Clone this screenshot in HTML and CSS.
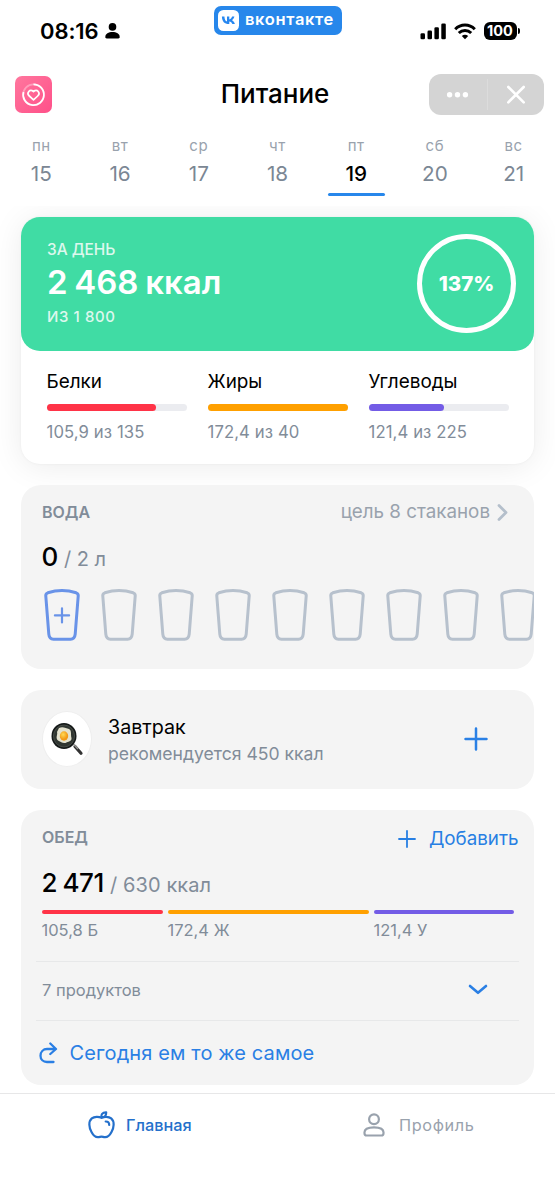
FILE: index.html
```html
<!DOCTYPE html>
<html lang="ru">
<head>
<meta charset="utf-8">
<title>Питание</title>
<link rel="stylesheet" href="styles.css">
</head>
<body>
<svg width="0" height="0" class="defs">
  <symbol id="glass" viewBox="0 0 36 52"><path d="M1.8 7.2C1.6 5.3 2.2 4.4 3.8 3.8C12.500 1 23.500 1 32.200 3.8C33.800 4.4 34.400 5.300 34.200 7.200L31.200 45.200C30.900 48.700 29.200 50.200 26.500 50.200H9.500C6.800 50.200 5.100 48.700 4.800 45.200Z" fill="none" stroke="currentColor" stroke-width="3"/></symbol>
</svg>
<div class="screen">
  <header class="status">
    <div class="clock"><span class="time">08:16</span>
      <svg width="15" height="16" viewBox="0 0 15 16"><circle cx="7.500" cy="3.900" r="3.800"/><path d="M0.300 14C0.300 10.600 3.600 9 7.500 9s7.200 1.600 7.200 5c0 1-.5 1.400-1.400 1.400H1.700C.8 15.400.3 15 .3 14z"/></svg>
    </div>
    <div class="vk">
      <svg width="21" height="21" viewBox="0 0 21 21"><rect width="21" height="21" rx="5.500" fill="#fff"/><path d="M3.300 6.500h2.500c.1 3.200 1.400 4.800 2.600 5.100V6.500h2.300v2.900c1.300-.1 2.300-1.400 2.800-2.900h2.300c-.4 1.800-1.500 3.100-2.400 3.700 1 .5 2.200 1.500 2.900 3.900h-2.500c-.5-1.600-1.600-2.500-3.100-2.700v2.700h-.5c-4.200 0-6.800-2.700-6.900-7.600z" transform="translate(.6 0)" fill="#2787f0"/></svg>
      <span>вконтакте</span>
    </div>
    <div class="signals">
      <svg width="27" height="17" viewBox="0 0 27 17"><rect x=".5" y="10.300" width="4.500" height="6" rx="1.300"/><rect x="7.500" y="7.600" width="4.500" height="8.700" rx="1.300"/><rect x="14.400" y="4.200" width="4.500" height="12.100" rx="1.300"/><rect x="21.300" y=".5" width="4.500" height="15.800" rx="1.300"/></svg>
      <svg width="22" height="17" viewBox="0 0 22 17" fill="none" stroke="#000" stroke-width="3"><path d="M1.200 6.200C6.700.7 15.300.7 20.800 6.200"/><path d="M4.800 10C8.300 6.600 13.700 6.600 17.200 10"/><path d="M11 16.200L7.800 13C9.600 11.400 12.400 11.400 14.200 13Z" fill="#000" stroke="none"/></svg>
      <div class="battery"><span class="charge">100</span><i class="tip"></i></div>
    </div>
  </header>

  <div class="titlebar">
    <svg class="app" width="37" height="37" viewBox="0 0 37 37"><defs><linearGradient id="pink" x1="0" y1="0" x2="1" y2="1"><stop offset="0" stop-color="#ff779e"/><stop offset="1" stop-color="#ff5089"/></linearGradient></defs><rect width="37" height="37" rx="7" fill="url(#pink)"/><g fill="none" stroke="#fff" stroke-width="1.700"><circle cx="18.500" cy="18.700" r="10.400" opacity=".35"/><path d="M18.500 8.300A10.400 10.400 0 1 1 8.500 15.900"/><path d="M18.500 23.800L14.300 20C11.100 17 14.700 12.300 18.500 15.500C22.300 12.300 25.900 17 22.700 20Z" stroke-linejoin="round"/></g></svg>
    <h1>Питание</h1>
    <div class="controls">
      <svg width="58" height="41" viewBox="0 0 58 41" fill="#fff"><circle cx="20.600" cy="20.700" r="2.700"/><circle cx="28.500" cy="20.700" r="2.700"/><circle cx="36.400" cy="20.700" r="2.700"/></svg>
      <svg class="close" width="57" height="41" viewBox="0 0 57 41" stroke="#fff" stroke-width="2.600" stroke-linecap="round"><path d="M21.300 13L36.700 28.400M36.700 13L21.300 28.400"/></svg>
    </div>
  </div>

  <nav class="week">
    <div class="day"><small>пн</small><b>15</b></div>
    <div class="day"><small>вт</small><b>16</b></div>
    <div class="day"><small>ср</small><b>17</b></div>
    <div class="day"><small>чт</small><b>18</b></div>
    <div class="day active"><small>пт</small><b>19</b></div>
    <div class="day"><small>сб</small><b>20</b></div>
    <div class="day"><small>вс</small><b>21</b></div>
  </nav>

  <main>
    <section class="summary">
      <div class="total">
        <div>
          <p class="cap">ЗА ДЕНЬ</p>
          <p class="kcal">2 468 ккал</p>
          <p class="of">ИЗ 1 800</p>
        </div>
        <div class="ring"><span>137%</span></div>
      </div>
      <div class="macros">
        <div><h2>Белки</h2><div class="bar"><i class="red" style="width:78.400%"></i></div><p>105,9 из 135</p></div>
        <div><h2>Жиры</h2><div class="bar"><i class="orange" style="width:100%"></i></div><p>172,4 из 40</p></div>
        <div><h2>Углеводы</h2><div class="bar"><i class="violet" style="width:54%"></i></div><p>121,4 из 225</p></div>
      </div>
    </section>

    <section class="card water">
      <div class="head"><h3>ВОДА</h3><div class="goal"><span>цель 8 стаканов</span><svg width="11" height="18" viewBox="0 0 11 18" fill="none" stroke="#b4bfcb" stroke-width="2.800" stroke-linecap="round" stroke-linejoin="round"><path d="M2 2.500L9 9.500L2 16.500"/></svg></div></div>
      <p class="amount"><strong>0</strong><span>/ 2 л</span></p>
      <div class="glasses">
        <svg class="first" viewBox="0 0 36 52"><use href="#glass"/><path d="M18 19.300V33.500M10.900 26.400H25.100" stroke="currentColor" stroke-width="2.200" stroke-linecap="round"/></svg>
        <svg><use href="#glass"/></svg><svg><use href="#glass"/></svg><svg><use href="#glass"/></svg><svg><use href="#glass"/></svg><svg><use href="#glass"/></svg><svg><use href="#glass"/></svg><svg><use href="#glass"/></svg><svg><use href="#glass"/></svg>
      </div>
    </section>

    <section class="card breakfast">
      <div class="picture">
        <svg width="34" height="36" viewBox="0 0 34 36"><defs><radialGradient id="yolk" cx=".4" cy=".35"><stop offset="0" stop-color="#ffdb55"/><stop offset="1" stop-color="#f39a16"/></radialGradient></defs><path d="M25 25.500L31 32.300" stroke="#333" stroke-width="3.200" stroke-linecap="round"/><path d="M23 22.500L28 28" stroke="#92928f" stroke-width="1.500"/><ellipse cx="14" cy="15" rx="12.500" ry="13" fill="#151918"/><ellipse cx="14" cy="15" rx="10.600" ry="11" fill="#303631" stroke="#5b605b" stroke-width=".6"/><path d="M9 7C13 5 16 7.500 19 8C22 9.500 20.500 14 21.500 17C22 20.500 18 20.500 15.500 22C12 22.500 11.500 21 8 19.500C5 16.500 8 14 7 11Z" fill="#e4e2ce"/><ellipse cx="14" cy="15" rx="4.200" ry="4.700" fill="url(#yolk)"/></svg>
      </div>
      <div class="meal"><h2>Завтрак</h2><p>рекомендуется 450 ккал</p></div>
      <svg class="plus" width="24" height="24" viewBox="0 0 24 24" stroke="#2a80e5" stroke-width="2.500" stroke-linecap="round"><path d="M12 1.500V22.500M1.500 12H22.500"/></svg>
    </section>

    <section class="card lunch">
      <div class="head"><h3>ОБЕД</h3><div class="add"><svg width="18" height="18" viewBox="0 0 18 18" stroke="#277fe3" stroke-width="1.800" stroke-linecap="round"><path d="M9 1V17M1 9H17"/></svg><span>Добавить</span></div></div>
      <p class="amount"><strong>2 471</strong><span>/ 630 ккал</span></p>
      <div class="split">
        <div><i class="red"></i><p>105,8 Б</p></div>
        <div><i class="orange"></i><p>172,4 Ж</p></div>
        <div><i class="violet"></i><p>121,4 У</p></div>
      </div>
      <div class="products"><span>7 продуктов</span><svg width="20" height="11" viewBox="0 0 20 11" fill="none" stroke="#2a7fe4" stroke-width="2.600" stroke-linecap="round" stroke-linejoin="round"><path d="M2 2L10 8.800L18 2"/></svg></div>
      <div class="repeat"><svg width="19" height="22" viewBox="0 0 19 22" fill="none" stroke="#2a7fe4" stroke-width="2.300" stroke-linecap="round" stroke-linejoin="round"><path d="M14.500 20H8C4.200 20 1.500 17.500 1.500 13.700S4.200 7 8 7H16.800M11.300 1.500L17 7L11.300 12"/></svg><span>Сегодня ем то же самое</span></div>
    </section>
  </main>

  <footer class="tabs">
    <div class="tab main"><svg width="27" height="28" viewBox="0 0 27 28" fill="none" stroke="currentColor" stroke-width="2.200" stroke-linecap="round" stroke-linejoin="round"><path d="M13.500 6.800C10.800 5.400 6.400 5.300 3.800 7.400C.2 10.500 1 16.500 3.500 21C5.200 24.300 7.200 26.300 10 26.200C11.500 26.200 12.300 25.600 13.500 25.600S15.500 26.200 17 26.200C19.800 26.300 21.800 24.300 23.500 21C26 16.500 26.800 10.500 23.200 7.400C20.600 5.300 16.200 5.400 13.500 6.800C12.700 3.600 14.300 1.300 18.200 1.400C18.300 4.700 16.700 6.500 13.500 6.800M17.700 10.500C20 10.400 21.200 11.700 21.200 13.900"/></svg><span>Главная</span></div>
    <div class="tab profile"><svg width="22" height="24" viewBox="0 0 22 24" fill="none" stroke="currentColor" stroke-width="2.200"><circle cx="11" cy="6.300" r="4.900"/><path d="M1.500 19.300C1.500 16 5.700 14.300 11 14.300S20.500 16 20.500 19.300V20.200C20.500 21.700 19.800 22.500 18.300 22.500H3.700C2.200 22.500 1.500 21.700 1.500 20.200Z"/></svg><span>Профиль</span></div>
  </footer>
</div>
</body>
</html>
```

FILE: styles.css
```css
* { box-sizing: border-box; }
body, h1, h2, h3, p { margin: 0; font-weight: 400; }
body { font-family: Inter, "Liberation Sans", sans-serif; background: #fff; color: #000; white-space: nowrap; }
svg { display: block; flex: none; }
.defs { position: absolute; }
.screen { width: 555px; height: 1200px; overflow: hidden; display: flex; flex-direction: column; }

.status { height: 61px; display: grid; grid-template-columns: 213.500px 128px 1fr; }
.clock { display: flex; align-items: center; gap: 6px; padding: 1px 0 0 40px; }
.time { font-size: 22px; font-weight: 600; letter-spacing: -.1px; line-height: 28px; }
.vk { margin-top: 6px; height: 29px; border-radius: 7px; background: #2787eb; display: flex; align-items: center; padding-left: 4px; gap: 6.500px; color: #fff; font-size: 16.500px; font-weight: 600; line-height: 24px; letter-spacing: .65px; }
.vk span { margin-top: -3px; }
.signals { display: flex; align-items: center; padding: 1px 0 0 78px; gap: 7px; }
.battery { display: flex; align-items: center; gap: 1px; margin-left: 1px; }
.charge { width: 33px; height: 18px; border-radius: 6px; background: #000; color: #fff; text-align: center; font-size: 14.500px; line-height: 18px; font-weight: 700; }
.tip { width: 2px; height: 6px; border-radius: 0 3px 3px 0; background: #000; }

.titlebar { height: 67px; padding-bottom: 1px; display: grid; grid-template-columns: 125px 1fr 125px; align-items: center; }
.app { margin-left: 15px; }
h1 { text-align: center; font-size: 26px; line-height: 34px; font-weight: 500; padding-right: 5px; }
.controls { width: 115px; height: 41px; margin-left: -1px; border-radius: 12px; background: #d4d4d4; display: flex; }
.close { background: linear-gradient(#dcdcdc, #dcdcdc) 0 50% / 1px 31px no-repeat; }

.week { height: 78px; padding: 9px 2px 0; display: grid; grid-template-columns: repeat(7, 1fr); }
.day { display: flex; flex-direction: column; align-items: center; color: #7b8794; }
.day small { font-size: 15px; line-height: 18px; color: #99a2ad; letter-spacing: .6px; }
.day b { font-size: 20.700px; font-weight: 400; line-height: 26px; margin-top: 5.500px; }
.active b { color: #000; font-weight: 500; }
.active::after { content: ""; width: 57px; height: 3px; border-radius: 2px; margin-top: 6px; background: #2787eb; }

main { height: 887px; padding: 10.500px 21px 0; overflow: hidden; }
.summary { height: 247px; border-radius: 19px; box-shadow: 0 0 3px rgba(0,0,0,.05), 0 3px 32px rgba(0,0,0,.08); background: #fff; }
.total { height: 134px; border-radius: 19px; background: #40dca4; color: #fff; padding: 0 18px 0 26px; display: flex; justify-content: space-between; align-items: center; }
.cap { font-size: 15.400px; line-height: 20px; font-weight: 500; opacity: .82; }
.kcal { font-size: 33px; line-height: 40px; font-weight: 600; margin-top: 2px; word-spacing: -1.600px; }
.of { font-size: 15px; line-height: 20px; font-weight: 500; margin-top: 5px; opacity: .82; letter-spacing: .6px; }
.ring { width: 99px; height: 99px; border-radius: 50%; border: 5px solid #fff; display: grid; place-items: center; font-size: 20.500px; font-weight: 800; }
.macros { display: grid; grid-template-columns: repeat(3, 140px); column-gap: 21px; padding: 19px 25.500px; }
.macros h2 { font-size: 18.900px; line-height: 24px; }
.bar { height: 7px; border-radius: 4px; margin-top: 10px; background: #ebecf0; }
.bar i { display: block; height: 7px; border-radius: 4px; }
.macros p { margin-top: 10px; font-size: 16.700px; line-height: 22px; color: #818c99; letter-spacing: .1px; }
.red { background: #ff3347; }
.orange { background: #ffa000; }
.violet { background: #735ce6; }

.card { background: #f4f4f4; border-radius: 20px; position: relative; overflow: hidden; }
.water { height: 184px; margin-top: 21px; }
.head { display: flex; justify-content: space-between; padding: 15.500px 26px 0 21px; }
h3 { font-size: 16px; line-height: 24px; font-weight: 600; color: #818c99; }
.goal { display: flex; gap: 7px; align-items: center; font-size: 18.800px; line-height: 24px; color: #99a2ad; }
.amount { display: flex; align-items: baseline; gap: 6px; padding-left: 20.500px; color: #818c99; font-size: 20px; line-height: 32px; margin-top: 17px; }
.amount strong { color: #000; font-size: 26px; font-weight: 500; letter-spacing: -.4px; word-spacing: -1.200px; }
.glasses { display: flex; gap: 21px; padding-left: 23.200px; margin-top: 14px; color: #b7c1cd; }
.glasses svg { width: 36px; height: 52px; }
.glasses .first { color: #6993e8; }

.breakfast { height: 98.500px; margin-top: 21.500px; padding: 0 46px 0 21px; display: flex; align-items: center; }
.picture { width: 50px; height: 56px; border-radius: 50%; background: #fff; border: 1px solid #eee; display: grid; place-items: center; }
.meal { flex: 1; margin-left: 16px; padding-top: 2px; }
.meal h2 { font-size: 19.700px; line-height: 26px; }
.meal p { font-size: 17.600px; line-height: 26px; margin-top: 1px; color: #818c99; }

.lunch { height: 275px; margin-top: 21px; }
.lunch .head { padding-right: 15.500px; padding-top: 16px; }
.lunch h3 { margin-top: -.500px; }
.add { display: flex; align-items: center; gap: 13px; font-size: 18.800px; line-height: 24px; color: #277fe3; padding-top: 1px; }
.lunch .amount { margin-top: 16px; letter-spacing: .1px; }
.split { display: grid; grid-template-columns: 121px 201px 140px; column-gap: 5px; padding: 9px 0 0 20.500px; }
.split i { display: block; height: 4px; border-radius: 2px; }
.split p { font-size: 16.500px; line-height: 22px; margin-top: 5px; color: #818c99; }
.products { height: 60px; margin: 20px 15px 0; padding: 0 31px 2px 6px; border: solid #e7e8e9; border-width: 1px 0; display: flex; align-items: center; justify-content: space-between; font-size: 16.500px; color: #818c99; }
.repeat { height: 65px; display: flex; align-items: center; padding-left: 17.500px; gap: 12px; color: #2a7fe4; font-size: 20px; letter-spacing: .13px; }

.tabs { height: 107px; border-top: 1px solid #e7e7e8; display: grid; grid-template-columns: 1fr 1fr; background: #fff; }
.tab { height: 61px; display: flex; align-items: center; font-size: 16.300px; gap: 11.500px; color: #99a2ad; }
.main { padding-left: 87.500px; color: #2470cb; font-weight: 500; }
.profile { padding-left: 85px; gap: 14.500px; letter-spacing: .6px; }
```
